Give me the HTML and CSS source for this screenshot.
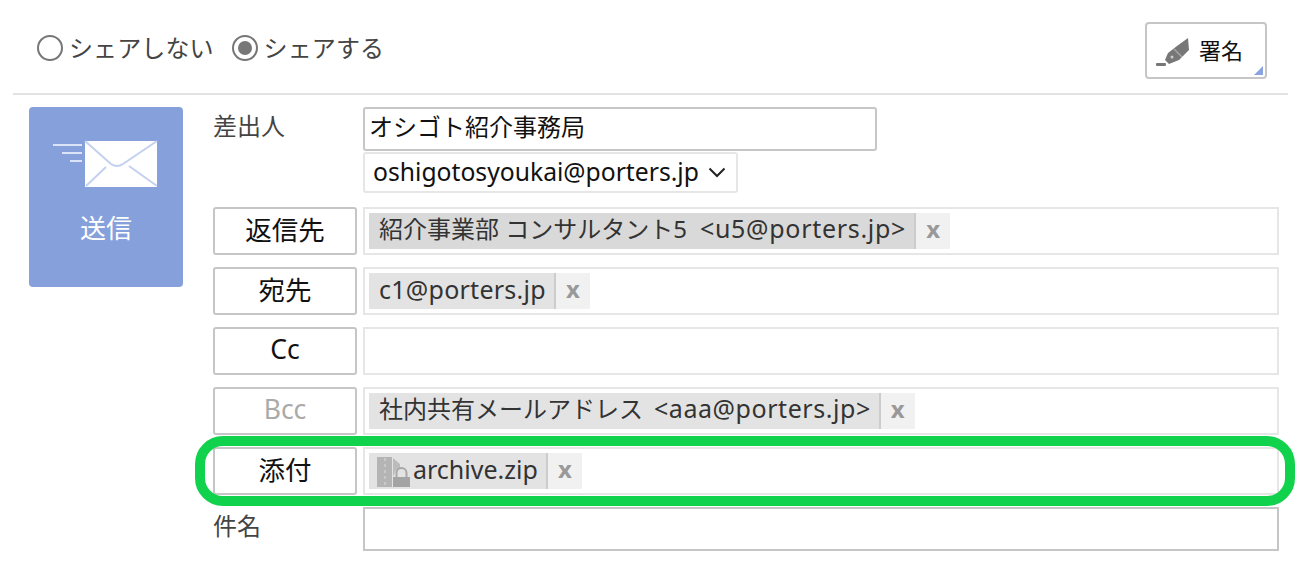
FILE: index.html
```html
<!DOCTYPE html>
<html lang="ja">
<head>
    <meta charset="UTF-8">
    <title>メール送信</title>
    <link rel="stylesheet" href="styles.css">
</head>
<body>
    <div class="top-bar">
        <div class="share-options">
            <label class="radio"><span class="radio-mark"></span>シェアしない</label>
            <label class="radio"><span class="radio-mark checked"></span>シェアする</label>
        </div>
        <button class="sign-btn" type="button">
            <svg class="sign-icon" width="40" height="36" viewBox="0 0 40 36">
                <rect x="0" y="32" width="10" height="3" rx="1" fill="#777"/>
                <path d="M32 7 L33 19 L23 29 L13 33 L9 29 L12 22 L21 15 Z" fill="#777"/>
                <path d="M18 18 L26 26" stroke="#aaa" stroke-width="1.2"/>
                <circle cx="16" cy="26" r="1.5" fill="#ccc"/>
            </svg>
            署名
            <span class="sign-corner"></span>
        </button>
    </div>

    <div class="mail-form">
        <div class="send-col">
            <button class="send-btn" type="button">
                <svg width="106" height="48" viewBox="0 0 106 48">
                    <g fill="#dbe3f6">
                        <rect x="0" y="4" width="29" height="2"/>
                        <rect x="9" y="12" width="20" height="2"/>
                        <rect x="17" y="20" width="12" height="2"/>
                    </g>
                    <rect x="32" y="1" width="72" height="46" fill="#fff"/>
                    <g fill="none" stroke="#c3d0ef" stroke-width="2">
                        <path d="M32 1 L58 24 Q64 28 70 24 L104 1"/>
                        <path d="M33 46 L53 27"/>
                        <path d="M104 46 L76 26"/>
                    </g>
                </svg>
                <span>送信</span>
            </button>
        </div>

        <div class="fields">
            <div class="row from-row">
                <div class="plain-label">差出人</div>
                <div class="from-inputs">
                    <div class="from-name">オシゴト紹介事務局</div>
                    <div class="from-select">
                        <span class="from-address">oshigotosyoukai@porters.jp</span>
                        <svg width="18" height="11" viewBox="0 0 18 11"><path d="M1.5 1.5 L9 9 L16.5 1.5" fill="none" stroke="#222" stroke-width="2"/></svg>
                    </div>
                </div>
            </div>

            <div class="row">
                <button class="field-btn jp" type="button">返信先</button>
                <div class="tag-box">
                    <span class="tag dark"><span class="tag-text jp-text"><span>紹介事業部 コンサルタント5<span class="latin addr">&lt;u5@porters.jp&gt;</span></span></span><span class="tag-x">x</span></span>
                </div>
            </div>
            <div class="row">
                <button class="field-btn jp" type="button">宛先</button>
                <div class="tag-box">
                    <span class="tag"><span class="tag-text"><span class="latin">c1@porters.jp</span></span><span class="tag-x">x</span></span>
                </div>
            </div>
            <div class="row">
                <button class="field-btn" type="button">Cc</button>
                <div class="tag-box"></div>
            </div>
            <div class="row">
                <button class="field-btn off" type="button">Bcc</button>
                <div class="tag-box">
                    <span class="tag"><span class="tag-text jp-text"><span>社内共有メールアドレス<span class="latin addr">&lt;aaa@porters.jp&gt;</span></span></span><span class="tag-x">x</span></span>
                </div>
            </div>
            <div class="row attach-row">
                <button class="field-btn jp" type="button">添付</button>
                <div class="tag-box">
                    <span class="tag"><span class="tag-text file">
                        <svg class="zip-icon" width="33" height="32" viewBox="0 0 33 32">
                            <path d="M0 2 H15 V32 H0 Z" fill="#b4b4b4"/>
                            <path d="M16 3 L23 9 V13 L19 15 L17 20 L16 22 Z" fill="#bcbcbc"/>
                            <path d="M8 3 V30" stroke="#c8c8c8" stroke-width="2" stroke-dasharray="3 3"/>
                            <path d="M19.5 22 V18 A5 5 0 0 1 29.5 18 V22" fill="none" stroke="#a8a8a8" stroke-width="2"/>
                            <rect x="16" y="22" width="17" height="10" fill="#a4a4a4"/>
                        </svg><span class="latin">archive.zip</span></span><span class="tag-x">x</span></span>
                </div>
                <div class="highlight"></div>
            </div>
            <div class="row subject-row">
                <div class="plain-label">件名</div>
                <div class="subject-box"></div>
            </div>
        </div>
    </div>
</body>
</html>
```

FILE: styles.css
```css
* {
    box-sizing: border-box;
}
body {
    margin: 0;
    padding: 0 10px 0 13px;
    font-family: "Noto Sans", "Noto Sans CJK JP", sans-serif;
    font-size: 24px;
    color: #333;
    background-color: #fff;
    overflow: hidden;
    height: 566px;
}
button {
    font-family: inherit;
    cursor: pointer;
}
.latin {
    font-size: 25px;
    letter-spacing: 0.25px;
}
.addr {
    margin-left: 11px;
    letter-spacing: 0.55px;
}
.dark .addr {
    margin-left: 13px;
    letter-spacing: 0.7px;
}
.top-bar {
    display: flex;
    justify-content: space-between;
    align-items: flex-start;
    height: 95px;
    padding: 22px 21px 0 24px;
    border-bottom: 2px solid #e2e2e2;
}
.share-options {
    display: flex;
    gap: 18px;
    padding-top: 2px;
}
.radio {
    display: flex;
    align-items: center;
    gap: 6px;
    height: 44px;
    font-size: 24px;
    letter-spacing: 0.1px;
    color: #444;
}
.radio-mark {
    width: 26px;
    height: 26px;
    margin-top: 4px;
    border: 2px solid #767676;
    border-radius: 50%;
    background-color: #fff;
}
.radio-mark.checked {
    padding: 4px;
    background-color: #777;
    background-clip: content-box;
}
.sign-btn {
    position: relative;
    display: flex;
    align-items: center;
    gap: 3px;
    width: 122px;
    height: 57px;
    padding: 0 0 3px 9px;
    font-size: 22px;
    color: #111;
    background-color: #fff;
    border: 2px solid #c6c6c6;
    border-radius: 4px;
}
.sign-corner {
    position: absolute;
    right: 2px;
    bottom: 2px;
    width: 0;
    height: 0;
    border-style: solid;
    border-width: 0 0 9px 9px;
    border-color: transparent transparent #8aa2e0 transparent;
}
.mail-form {
    display: flex;
    padding: 12px 9px 0 16px;
}
.send-col {
    width: 184px;
    flex-shrink: 0;
}
.send-btn {
    display: flex;
    flex-direction: column;
    align-items: center;
    width: 154px;
    height: 180px;
    padding: 33px 0 0 0;
    font-size: 26px;
    color: #fff;
    background-color: #86a0dc;
    border: none;
    border-radius: 4px;
}
.send-btn span {
    margin-top: 20px;
}
.fields {
    flex: 1;
    display: flex;
    flex-direction: column;
    gap: 12px;
}
.row {
    display: flex;
    gap: 6px;
    height: 48px;
    position: relative;
}
.from-row {
    height: 88px;
}
.subject-row {
    height: 44px;
}
.plain-label {
    width: 144px;
    flex-shrink: 0;
    font-size: 24px;
    line-height: 38px;
    color: #444;
}
.from-inputs {
    display: flex;
    flex-direction: column;
    gap: 1px;
    align-items: flex-start;
}
.from-name {
    width: 514px;
    height: 44px;
    padding-left: 4px;
    line-height: 35px;
    color: #111;
    border: 2px solid #c6c6c6;
    border-radius: 3px;
}
.from-select {
    display: flex;
    align-items: center;
    gap: 9px;
    width: 375px;
    height: 41px;
    padding: 0 0 3px 8px;
    color: #111;
    border: 2px solid #e6e6e6;
    border-radius: 3px;
}
.from-address {
    font-size: 24.7px;
}
.from-select svg {
    margin-top: 3px;
}
.field-btn {
    width: 144px;
    flex-shrink: 0;
    padding: 0 0 4px 0;
    font-size: 26.5px;
    color: #111;
    background-color: #fff;
    border: 2px solid #c6c6c6;
    border-radius: 3px;
}
.field-btn.jp {
    padding-bottom: 8px;
}
.field-btn.off {
    color: #aaa;
}
.tag-box {
    flex: 1;
    display: flex;
    align-items: center;
    padding-left: 4px;
    border: 2px solid #e6e6e6;
}
.tag {
    display: flex;
    height: 36px;
    font-size: 24px;
}
.tag-text {
    display: flex;
    align-items: center;
    padding: 0 8px 4px 10px;
    color: #333;
    background-color: #e3e3e3;
    border-right: 2px solid #ccc;
}
.tag-text.jp-text {
    padding-bottom: 7px;
}
.tag.dark .tag-text {
    background-color: #d9d9d9;
}
.tag-text.file {
    padding: 0 8px 0 8px;
    gap: 3px;
}
.tag-text.file .latin {
    padding-bottom: 5px;
    letter-spacing: 0;
}
.tag-x {
    width: 34px;
    line-height: 31px;
    text-align: center;
    font-weight: bold;
    color: #999;
    background-color: #f1f1f1;
}
.subject-box {
    flex: 1;
    border: 2px solid #c6c6c6;
}
.highlight {
    position: absolute;
    left: -18px;
    right: -16px;
    top: -11px;
    bottom: -11px;
    border: 10px solid #10d24c;
    border-radius: 28px;
    pointer-events: none;
}
```
